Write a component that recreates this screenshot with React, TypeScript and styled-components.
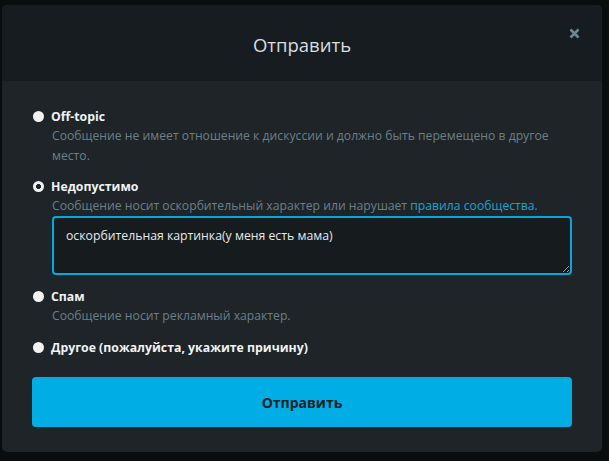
import React, { useEffect, useRef } from "react";
import styled, { createGlobalStyle } from "styled-components";

const Global = createGlobalStyle`
  html, body { margin: 0; padding: 0; background: #0a0d0e; }
  body { font-family: "Open Sans", "Noto Sans", sans-serif; }
  * { box-sizing: border-box; }
`;

const Page = styled.div`
  width: 609px;
  height: 461px;
  padding: 5px 0 0 2px;
`;

const Modal = styled.div`
  width: 600px;
  border-radius: 5px;
  overflow: hidden;
  background: #1e2427;
`;

const Header = styled.div`
  position: relative;
  height: 76px;
  background: #161c1f;
  display: flex;
  align-items: center;
  justify-content: center;
`;

const Title = styled.h2`
  margin: 0;
  font-size: 18.5px;
  font-weight: 400;
  color: #d9dee0;
  transform: translateY(1px);
`;

const Close = styled.button`
  position: absolute;
  right: 18px;
  top: 18px;
  width: 20px;
  height: 20px;
  padding: 0;
  border: none;
  background: none;
  display: flex;
  align-items: center;
  justify-content: center;
  cursor: pointer;
`;

const Body = styled.div`
  padding: 25px 30px 25px 30px;
  display: flex;
  flex-direction: column;
`;

const Options = styled.div`
  display: flex;
  flex-direction: column;
  gap: 10px;
`;

const Option = styled.div<{ $extraTop?: number }>`
  display: flex;
  flex-direction: column;
  margin-top: ${(p) => p.$extraTop ?? 0}px;
`;

const Row = styled.label`
  display: flex;
  align-items: center;
  gap: 7px;
  height: 20px;
  padding-left: 1px;
  cursor: pointer;
`;

const Radio = styled.input.attrs({ type: "radio" })`
  appearance: none;
  margin: 0;
  width: 11px;
  height: 11px;
  border-radius: 50%;
  background: #f2f2f2;
  flex: none;
  &:checked {
    background: radial-gradient(circle, #1e2427 0 2.2px, #f2f2f2 2.8px);
  }
`;

const Label = styled.span`
  font-size: 12.3px;
  font-weight: 700;
  color: #f0f2f3;
`;

const Desc = styled.div`
  padding-left: 20px;
  font-size: 12.2px;
  line-height: 20px;
  color: #6a8087;
`;

const Link = styled.a`
  color: #16a6d2;
  text-decoration: none;
`;

const Field = styled.textarea`
  display: block;
  margin: 0 0 1px 20px;
  width: 520px;
  height: 59px;
  padding: 8px 12px;
  background: #161b1e;
  border: 2px solid #03a9dc;
  border-radius: 4px;
  color: #e6e8e9;
  caret-color: #e6e8e9;
  font-family: "Open Sans", "Noto Sans", sans-serif;
  font-size: 12.25px;
  line-height: 20px;
  outline: none;
  resize: vertical;
`;

const Submit = styled.button`
  margin-top: 20px;
  height: 50px;
  width: 540px;
  border: none;
  border-radius: 4px;
  background: #00aee5;
  color: #132228;
  font-family: "Open Sans", "Noto Sans", sans-serif;
  font-size: 14px;
  font-weight: 700;
  cursor: pointer;
`;

export default function App() {
  const ref = useRef<HTMLTextAreaElement>(null);
  useEffect(() => {
    const el = ref.current;
    if (el) {
      el.focus();
      const n = el.value.length;
      el.setSelectionRange(n, n);
    }
  }, []);
  return (
    <Page>
      <Global />
      <Modal>
        <Header>
          <Title>Отправить</Title>
          <Close aria-label="Закрыть">
            <svg width="11" height="11" viewBox="0 0 11 11">
              <path d="M1.5 1.5 L9.5 9.5 M9.5 1.5 L1.5 9.5" stroke="#6e8790" strokeWidth="2.6" strokeLinecap="butt" />
            </svg>
          </Close>
        </Header>
        <Body>
          <Options>
            <Option>
              <Row>
                <Radio name="reason" />
                <Label>Off-topic</Label>
              </Row>
              <Desc>Сообщение не имеет отношение к дискуссии и должно быть перемещено в другое место.</Desc>
            </Option>
            <Option>
              <Row>
                <Radio name="reason" defaultChecked />
                <Label>Недопустимо</Label>
              </Row>
              <Desc>
                Сообщение носит оскорбительный характер или нарушает <Link href="#">правила сообщества.</Link>
              </Desc>
              <Field ref={ref} defaultValue="оскорбительная картинка(у меня есть мама)" />
            </Option>
            <Option>
              <Row>
                <Radio name="reason" />
                <Label>Спам</Label>
              </Row>
              <Desc>Сообщение носит рекламный характер.</Desc>
            </Option>
            <Option $extraTop={1}>
              <Row>
                <Radio name="reason" />
                <Label>Другое (пожалуйста, укажите причину)</Label>
              </Row>
            </Option>
          </Options>
          <Submit>Отправить</Submit>
        </Body>
      </Modal>
    </Page>
  );
}
